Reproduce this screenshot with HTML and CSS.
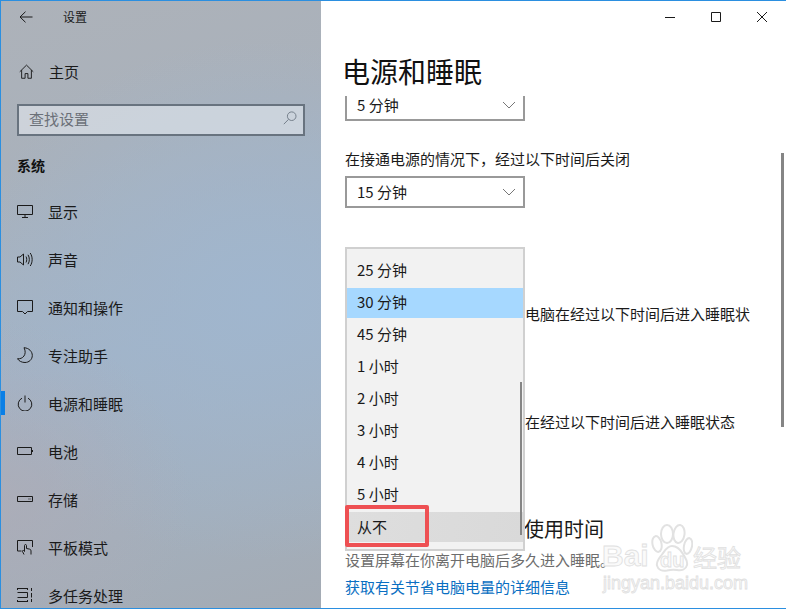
FILE: index.html
```html
<!DOCTYPE html>
<html lang="zh-CN">
<head>
<meta charset="utf-8">
<title>设置</title>
<link rel="stylesheet" href="styles.css">
</head>
<body>
<div class="window">
  <aside class="sidebar">
    <div class="titlebar">
      <svg class="back" viewBox="0 0 14 12"><path d="M6.500 .7 1 6l5.500 5.300M1 6h12.500"/></svg>
      <span class="apptitle">设置</span>
    </div>
    <div class="home">
      <svg class="ico" viewBox="0 0 16 16"><path d="M.8 8.300 8 1.200l7.200 7.100M2.800 6.500v8.700h3.700v-5h3v5h3.700V6.500"/></svg>
      <span>主页</span>
    </div>
    <div class="search">
      <span>查找设置</span>
      <svg class="mag" viewBox="0 0 14 14"><circle cx="8.700" cy="5.200" r="4.300"/><path d="M5.600 8.300 .8 13.200"/></svg>
    </div>
    <div class="group">系统</div>
    <nav class="nav">
      <div class="item"><svg class="ico" viewBox="0 0 16 16"><path d="M.5 2.500h15v9H.5zM8 11.500v3M5 14.500h6"/></svg><span>显示</span></div>
      <div class="item"><svg class="ico" viewBox="0 0 16 16"><path d="M.5 6h2.500l3.500-3v11l-3.500-3H.5zM9 5.500c1 1.800 1 4.200 0 6M11 3.800c1.800 2.800 1.800 6.600 0 9.400M13.200 2c2.600 3.800 2.600 9.200 0 13"/></svg><span>声音</span></div>
      <div class="item"><svg class="ico" viewBox="0 0 16 16"><path d="M.5 1.500h15v11h-5l-2.500 2.500-2.500-2.500h-5z"/></svg><span>通知和操作</span></div>
      <div class="item"><svg class="ico" viewBox="0 0 16 16"><path d="M7 .7C12 1 15.300 4.500 15.300 8.500c0 4-3.300 7-7.300 7-3.300 0-6-1.400-7.500-3.800C5.500 12.500 10.500 7.500 7 .7z"/></svg><span>专注助手</span></div>
      <div class="item active"><svg class="ico" viewBox="0 0 16 16"><path d="M5 3.200a6.800 6.800 0 1 0 6 0M8 .5v7"/></svg><span>电源和睡眠</span></div>
      <div class="item"><svg class="ico" viewBox="0 0 16 16"><path d="M.5 4.500h14v7H.5zM15.500 7v2"/></svg><span>电池</span></div>
      <div class="item"><svg class="ico" viewBox="0 0 16 16"><path d="M.5 5.500h15v5H.5zM11.500 8h1M13.500 8h.6"/></svg><span>存储</span></div>
      <div class="item"><svg class="ico" viewBox="0 0 16 16"><path d="M4.500 12H.5V1.500h15V8M7 15.500l-1.500-3c-.4-1 .7-1.500 1.300-.8l.7.800V6.500c0-1.300 2-1.300 2 0V9.500l3 .6c1 .2 1.500.8 1.500 1.700v3.700"/></svg><span>平板模式</span></div>
      <div class="item"><svg class="ico" viewBox="0 0 16 16"><path d="M.5 1.500h10M.5 14.500h10M.5 1v2M10.500 1v2M.5 13v2M10.500 13v2M.5 5.500h10v5H.5M14.500 1v3M14.500 6v4.500M14.500 12v3"/></svg><span>多任务处理</span></div>
    </nav>
  </aside>
  <main class="content">
    <div class="winbar">
      <svg class="wbtn" viewBox="0 0 12 12"><path d="M1 6.500h10"/></svg>
      <svg class="wbtn" viewBox="0 0 12 12"><path d="M1.500 1.500h9v9h-9z"/></svg>
      <svg class="wbtn" viewBox="0 0 12 12"><path d="M1 1l10 10M11 1 1 11"/></svg>
    </div>
    <h1 class="heading">电源和睡眠</h1>
    <div class="scroll">
      <div class="select clipped"><span>5 分钟</span><svg class="chev" viewBox="0 0 14 8"><path d="M1 1l6 6 6-6"/></svg></div>
      <p class="label">在接通电源的情况下，经过以下时间后关闭</p>
      <div class="select"><span>15 分钟</span><svg class="chev" viewBox="0 0 14 8"><path d="M1 1l6 6 6-6"/></svg></div>
      <p class="side first">电脑在经过以下时间后进入睡眠状</p>
      <p class="side second">在经过以下时间后进入睡眠状态</p>
      <h2 class="sub">使用时间</h2>
      <p class="desc">设置屏幕在你离开电脑后多久进入睡眠。</p>
      <a class="link" href="#">获取有关节省电脑电量的详细信息</a>
      <div class="pagebar"></div>
      <div class="popup">
        <div class="opt">25 分钟</div>
        <div class="opt sel">30 分钟</div>
        <div class="opt">45 分钟</div>
        <div class="opt">1 小时</div>
        <div class="opt">2 小时</div>
        <div class="opt">3 小时</div>
        <div class="opt">4 小时</div>
        <div class="opt">5 小时</div>
        <div class="opt hover">从不</div>
        <div class="popbar"></div>
      </div>
      <div class="mark"></div>
    </div>
    <div class="wm">
      <svg class="paw" viewBox="0 0 42 48">
        <ellipse cx="6" cy="20" rx="4.500" ry="8" transform="rotate(-12 6 20)"/>
        <ellipse cx="16" cy="10" rx="6" ry="9"/>
        <ellipse cx="28" cy="10" rx="5.500" ry="9" transform="rotate(8 28 10)"/>
        <ellipse cx="37" cy="22" rx="4" ry="8" transform="rotate(12 37 22)"/>
        <path d="M21 22c5 0 8 3 11 8s5 7 4 11-5 6-10 5c-3-.5-6-.5-10 .5-5 1-9-1-10-5s2-7 5-11 5-8.500 10-8.500z"/>
      </svg>
      <span class="wm-bai">Bai</span>
      <span class="wm-du">du</span>
      <span class="wm-jy">经验</span>
      <span class="wm-url">jingyan.baidu.com</span>
    </div>
  </main>
</div>
</body>
</html>
```
FILE: styles.css
```css
* { box-sizing: border-box; }
html, body { margin: 0; padding: 0; }
body { width: 786px; height: 609px; overflow: hidden; font-family: "Noto Sans CJK SC", "Noto Sans", sans-serif; color: #1a1a1a; background: #fff; }
svg { fill: none; stroke: currentColor; stroke-width: 1; flex: none; display: block; }

.window { display: flex; width: 786px; height: 609px; border: 1px solid #2b8fe0; border-width: 1px 0 1px 1px; overflow: hidden; }

.sidebar {
  width: 320px; flex: none; display: flex; flex-direction: column; overflow: hidden;
  background:
    radial-gradient(ellipse 190px 180px at 0 500px, rgba(178,170,178,.55), rgba(178,170,178,0)),
    radial-gradient(ellipse 300px 260px at 260px 300px, #a0b6ce, rgba(160,182,206,0)),
    linear-gradient(165deg, #adb2b9 0%, #a9b1bb 25%, #a2b3c6 55%, #a3afbc 82%, #a4abb4 100%);
}
.sidebar > * { flex: none; }
.titlebar { height: 31px; display: flex; align-items: center; }
.back { width: 14px; height: 12px; margin-left: 18px; }
.apptitle { margin-left: 30px; font-size: 12px; line-height: 16px; }
.home { margin-top: 24px; height: 32px; padding-bottom: 2px; display: flex; align-items: center; font-size: 15px; }
.home .ico { width: 15px; height: 15px; margin-left: 18px; }
.home span { margin-left: 15px; }
.ico { width: 16px; height: 16px; margin-left: 16px; }
.search { margin: 16px 0 0 16px; width: 288px; height: 32px; border: 2px solid #68737f; background: rgba(226,231,238,.62); display: flex; align-items: center; justify-content: space-between; padding: 0 6px 4px 10px; color: #6b7078; font-size: 15px; }
.mag { width: 14px; height: 14px; color: #76808c; }
.group { margin: 15px 0 0 16px; height: 28px; line-height: 28px; font-size: 14px; font-weight: 700; color: #111; }
.nav { margin-top: 8px; display: flex; flex-direction: column; }
.item { height: 48px; flex: none; display: flex; align-items: center; font-size: 15px; position: relative; }
.item span { margin-left: 15px; }
.item.active::before { content: ""; position: absolute; left: 0; top: 12px; width: 4px; height: 24px; background: #0a7fe6; }

.content { flex: 1; position: relative; background: #fff; min-width: 0; }
.winbar { height: 31px; display: flex; justify-content: flex-end; align-items: center; gap: 34px; padding-right: 18px; }
.wbtn { width: 12px; height: 12px; }
.heading { margin: 17px 0 0 21px; height: 44px; line-height: 44px; font-size: 28px; font-weight: 400; color: #111; }
.scroll { position: relative; height: 514px; margin-top: 3px; padding-left: 24px; overflow: hidden; }
.select { width: 180px; height: 32px; border: 2px solid #999; display: flex; align-items: center; justify-content: space-between; padding: 0 7px 0 10px; font-size: 15px; line-height: 18px; background: #fff; }
.select.clipped { margin-top: -7px; }
.chev { width: 14px; height: 8px; color: #777; }
.label { margin: 27px 0 0; font-size: 15px; line-height: 22px; height: 22px; }
.label + .select { margin-top: 6px; }
.side { margin: 0 0 0 180px; font-size: 15px; line-height: 22px; height: 22px; }
.side.first { margin-top: 95px; }
.side.second { margin-top: 86px; }
.sub { margin: 82px 0 0 179px; font-size: 20px; font-weight: 400; line-height: 28px; }
.desc { margin: 6px 0 0; font-size: 15px; line-height: 22px; color: #6d6d6d; }
.link { display: block; margin-top: 5px; font-size: 15px; line-height: 22px; color: #0a6fc2; text-decoration: none; }
.pagebar { position: absolute; right: 2px; top: 57px; width: 3px; height: 274px; background: #858585; }

.popup { position: absolute; left: 24px; top: 151px; width: 180px; height: 304px; background: #f2f2f2; border: 2px solid #d0d0d0; padding: 5px 0 0; }
.opt { height: 32px; line-height: 32px; padding-left: 10px; font-size: 15px; }
.opt.sel { background: #a6d8ff; margin-top: 2px; height: 30px; line-height: 28px; }
.opt.hover { background: linear-gradient(100deg, #dedede, #d9d9d9); margin-top: 2px; height: 30px; line-height: 30px; }
.popbar { position: absolute; right: 1px; top: 133px; width: 2px; height: 153px; background: #858585; }
.mark { position: absolute; left: 24px; top: 409px; width: 84px; height: 42px; border: 4px solid #ee5053; border-radius: 2px; }

.wm { position: absolute; left: 281px; top: 523px; width: 142px; height: 70px; pointer-events: none; color: #fafafa; font-family: "Liberation Sans", sans-serif; }
.wm span { position: absolute; white-space: nowrap; -webkit-text-stroke: .8px #e0e0e0; }
.paw { position: absolute; left: 49px; top: 0; width: 42px; height: 48px; fill: #fff; stroke: #e2e2e2; stroke-width: 2; }
.wm-bai { left: 0; top: 14px; font-weight: 700; font-size: 30px; line-height: 36px; }
.wm-du { left: 58px; top: 24px; font-weight: 700; font-size: 20px; line-height: 24px; }
.wm-jy { left: 91px; top: 18px; font-family: "Noto Sans CJK SC", sans-serif; font-size: 24px; line-height: 30px; }
.wm-url { left: 1px; top: 49px; font-size: 18px; line-height: 20px; }
```
